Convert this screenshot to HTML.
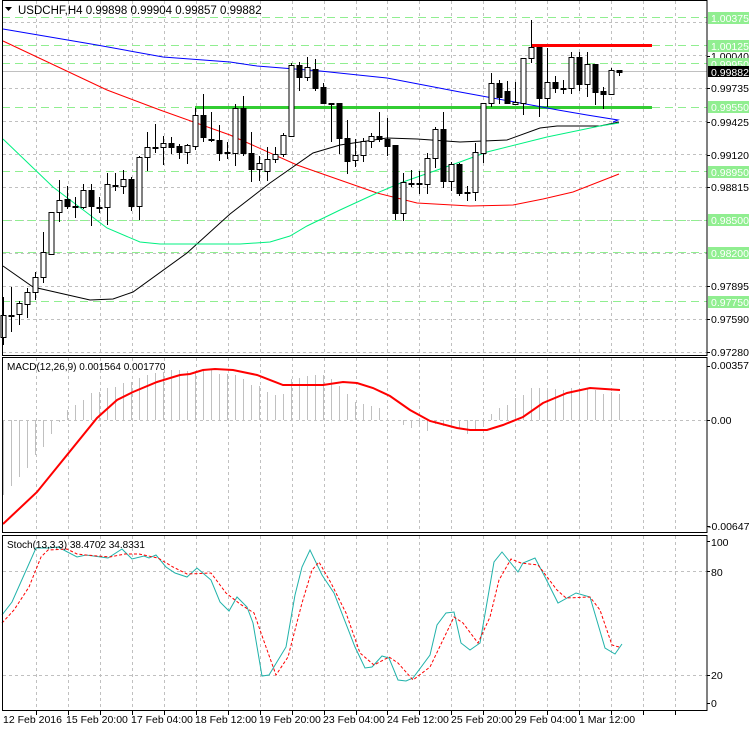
<!DOCTYPE html>
<html><head><meta charset="utf-8"><style>
html,body{margin:0;padding:0;background:#fff;width:749px;height:731px;overflow:hidden}
svg{display:block;font-family:"Liberation Sans",sans-serif}
</style></head><body>
<svg id="s" width="749" height="731" viewBox="0 0 749 731" xmlns="http://www.w3.org/2000/svg">
<rect width="749" height="731" fill="#fff"/>
<g id="grid" stroke="#c0c0c0" stroke-width="1" stroke-dasharray="3,3" fill="none"></g>
<g id="green" stroke="#90ee90" stroke-width="1" stroke-dasharray="8,5" fill="none">
<line x1="2" y1="17.5" x2="707" y2="17.5"/><line x1="2" y1="45.5" x2="707" y2="45.5"/><line x1="2" y1="63.5" x2="707" y2="63.5"/>
<line x1="2" y1="107.5" x2="707" y2="107.5"/><line x1="2" y1="171.5" x2="707" y2="171.5"/><line x1="2" y1="220.5" x2="707" y2="220.5"/>
<line x1="2" y1="252.5" x2="707" y2="252.5"/><line x1="2" y1="301.5" x2="707" y2="301.5"/>
</g>
<line x1="2" y1="71.5" x2="707" y2="71.5" stroke="#c0c0c0"/>
<g id="hist" stroke="#c0c0c0" stroke-width="1"></g>
<line x1="2" y1="420.5" x2="707" y2="420.5" stroke="#c0c0c0" stroke-dasharray="3,3"/>
<rect x="195" y="106" width="457" height="3" fill="#32cd32"/>
<rect x="532" y="44" width="120" height="3" fill="#ff0000"/>
<g fill="none" stroke-width="1">
<polyline stroke="#0000ff" points="3,29 97,45 163,57 230,62 257,66 320,71 387,78 460,92 542,107 558,110 587,115 618,120 613,122"/>
<polyline stroke="#ff0000" points="3,41 107,90 160,110 230,135 297,165 377,193 417,203 470,206 513,205 543,199 573,192 619,174"/>
<polyline stroke="#000" points="3,266 33,287 90,300 113,299 133,292 187,253 230,214 270,183 313,153 340,145 387,138 417,139 460,142 507,140 540,128 557,126 600,126 619,122"/>
<polyline stroke="#00f080" points="3,139 53,187 107,228 140,242 160,244 240,244 270,242 290,236 307,226 340,210 377,193 403,182 460,162 487,152 547,137 600,126 619,123"/>
</g>
<g id="candles"></g>
<polyline fill="none" stroke="#ff0000" stroke-width="2" points="3,524 37,492 67,455 97,418 117,400 133,392 157,382 180,375 190,374 203,370 215,369 233,370 257,375 283,385 323,385 343,382 357,383 373,388 390,396 410,410 430,421 457,428 470,430 487,430 503,425 523,417 543,403 567,393 590,388 620,390"/>
<polyline fill="none" stroke="#20b2aa" stroke-width="1" points="2,615 12,602 36,548 48,548 58,547 77,557 86,555 108,558 122,549 132,559 144,556 149,558 156,555 166,567 175,573 187,577 197,568 211,580 220,602 229,611 237,597 247,607 253,623 262,676 269,675 286,647 295,595 302,567 310,550 322,575 334,593 355,647 365,668 372,667 382,656 389,658 398,680 406,681 413,678 430,655 437,625 446,613 454,612 461,643 470,650 480,643 494,562 502,552 518,572 523,563 535,558 545,577 558,603 576,593 590,597 605,648 615,654 622,644"/>
<polyline fill="none" stroke="#ff0000" stroke-width="1" stroke-dasharray="3,2" points="2,623 14,610 29,587 41,557 48,550 67,549 77,554 86,555 110,557 125,554 139,554 158,558 173,567 187,574 211,573 226,593 240,604 254,613 266,647 276,675 288,657 302,603 312,570 319,562 331,583 346,613 360,653 374,665 389,657 398,663 413,680 430,667 442,642 454,617 463,623 478,643 490,617 499,580 511,559 521,563 538,565 557,590 566,598 590,597 600,610 612,645 619,647"/>
<g fill="none" stroke="#000" stroke-width="1">
<rect x="2.5" y="0.5" width="704.5" height="355"/>
<rect x="2.5" y="357.5" width="704.5" height="175"/>
<rect x="2.5" y="535.5" width="704.5" height="175"/>
</g>
<polygon points="5,7 12,7 8.5,11" fill="#000"/>
<text x="18" y="14" font-size="11.5" fill="#000">USDCHF,H4  0.99898 0.99904 0.99857 0.99882</text>
<text x="7" y="370" font-size="10" fill="#000">MACD(12,26,9) 0.001564 0.001770</text>
<text x="7" y="548" font-size="10" fill="#000">Stoch(13,3,3) 38.4702 34.8331</text>
<g font-size="10.5" fill="#000" id="axis">
<text x="711" y="60">1.00040</text>
<text x="711" y="92">0.99735</text>
<text x="711" y="126">0.99425</text>
<text x="711" y="159">0.99120</text>
<text x="711" y="191">0.98815</text>
<text x="711" y="290">0.97895</text>
<text x="711" y="323">0.97590</text>
<text x="711" y="356">0.97280</text>
<text x="711" y="369">0.003577</text>
<text x="711" y="424">0.00</text>
<text x="708" y="530">-0.00647</text>
<text x="711" y="546">100</text>
<text x="711" y="576">80</text>
<text x="711" y="679">20</text>
<text x="711" y="707">0</text>
</g>
<g font-size="10.5">
<rect x="708" y="12" width="41" height="12" fill="#90ee90"/><text x="711" y="22" fill="#fff">1.00375</text>
<rect x="708" y="40" width="41" height="12" fill="#90ee90"/><text x="711" y="50" fill="#fff">1.00125</text>
<rect x="708" y="58" width="41" height="12" fill="#90ee90"/><text x="711" y="68" fill="#fff">0.99950</text>
<rect x="708" y="66" width="41" height="11" fill="#000"/><text x="711" y="76" fill="#fff">0.99882</text>
<rect x="708" y="101" width="41" height="12" fill="#90ee90"/><text x="711" y="111" fill="#fff">0.99550</text>
<rect x="708" y="166" width="41" height="12" fill="#90ee90"/><text x="711" y="176" fill="#fff">0.98950</text>
<rect x="708" y="214" width="41" height="12" fill="#90ee90"/><text x="711" y="224" fill="#fff">0.98500</text>
<rect x="708" y="247" width="41" height="12" fill="#90ee90"/><text x="711" y="257" fill="#fff">0.98200</text>
<rect x="708" y="296" width="41" height="12" fill="#90ee90"/><text x="711" y="306" fill="#fff">0.97750</text>
</g>
<g font-size="10.5" fill="#000">
<text x="3" y="723">12 Feb 2016</text>
<text x="66" y="723">15 Feb 20:00</text>
<text x="131" y="723">17 Feb 04:00</text>
<text x="195" y="723">18 Feb 12:00</text>
<text x="259" y="723">19 Feb 20:00</text>
<text x="323" y="723">23 Feb 04:00</text>
<text x="387" y="723">24 Feb 12:00</text>
<text x="451" y="723">25 Feb 20:00</text>
<text x="515" y="723">29 Feb 04:00</text>
<text x="579" y="723">1 Mar 12:00</text>
</g>
<g stroke="#000" id="ticks"></g>
</svg>
<script>
var NS="http://www.w3.org/2000/svg";
function el(p,t,a){var e=document.createElementNS(NS,t);for(var k in a)e.setAttribute(k,a[k]);document.getElementById(p).appendChild(e);return e;}
for(var k=0;k<=20;k++){var x=Math.round(36+31.95*k)+0.5;
 el("grid","line",{x1:x,y1:1,x2:x,y2:355});el("grid","line",{x1:x,y1:358,x2:x,y2:532});el("grid","line",{x1:x,y1:536,x2:x,y2:710});
 el("ticks","line",{x1:x,y1:711,x2:x,y2:715});}
[22,55,88,121,154,187,220,253,286,319,352].forEach(function(y){el("grid","line",{x1:3,y1:y+0.5,x2:707,y2:y+0.5});});
[571.5,675.5].forEach(function(y){el("grid","line",{x1:3,y1:y,x2:707,y2:y});});
[56,88,122,155,187,286,319,352,366,420,526,541,571,675,703].forEach(function(y){el("ticks","line",{x1:707,y1:y+0.5,x2:710,y2:y+0.5});});
var h=[495,486,477,468,455,447,434,422,410,405,400,393,392,388,387,383,382,378,375,373,372,370,370,371,
371,370,369,374,374,375,379,385,386,392,395,394,379,378,376,375,375,379,386,394,402,404,406,408,419,420,425,428,427,431,424,426,428,429,434,430,427,414,408,405,398,395,388,388,391,389,390,388,391,388,390,394,392,394];
h.forEach(function(y,k){var x=Math.round(3.3+8*k)+0.5;el("hist","line",{x1:x,y1:420,x2:x,y2:y});});
var c=[[315,337,297,345,1],[315,316,287,332,0],[303,314,301,325,1],[292,304,288,318,1],[277,292,272,300,1],[252,277,232,283,1],[212,254,212,254,1],[200,212,180,222,1],[199,206,186,209,0],[206,207,197,218,0],[190,207,184,209,1],[190,206,184,226,0],[207,208,197,213,0],[184,207,173,225,1],[185,186,173,191,0],[179,186,170,194,1],[179,206,177,211,0],[157,206,156,220,1],[147,157,132,171,1],[147,148,124,153,0],[143,147,136,165,1],[143,147,137,154,0],[146,152,144,159,0],[145,152,144,164,1],[115,146,108,150,1],[115,137,94,142,0],[139,140,112,142,0],[140,153,125,161,0],[152,153,142,159,0],[108,153,104,166,1],[108,153,96,156,0],[153,169,132,182,0],[163,169,156,181,1],[159,171,147,181,1],[154,159,147,163,1],[135,154,133,157,1],[65,136,63,136,1],[65,77,62,91,0],[67,77,57,81,1],[69,88,59,91,0],[87,103,83,104,0],[103,104,103,142,0],[103,138,103,154,0],[138,161,120,174,0],[155,160,139,167,1],[141,155,138,162,1],[136,141,133,148,1],[136,139,112,142,0],[139,146,118,156,0],[145,213,145,220,0],[182,213,173,221,1],[183,184,170,187,0],[183,184,171,194,0],[158,184,153,194,1],[129,158,127,168,1],[129,181,112,188,0],[164,181,162,191,1],[164,193,163,196,0],[192,193,186,201,0],[152,192,143,201,1],[103,153,103,163,1],[83,103,73,107,1],[83,97,80,104,0],[91,103,81,104,0],[102,104,82,104,1],[58,103,58,115,1],[47,58,20,63,1],[47,98,47,117,0],[82,98,48,107,1],[82,88,76,93,0],[88,89,80,94,0],[57,88,52,94,1],[57,84,52,91,0],[64,84,52,97,1],[64,92,64,105,0],[91,94,87,109,0],[70,94,68,94,1],[70,72,70,76,0]];
c.forEach(function(d,k){var x=Math.round(3.3+8*k)+0.5;
 el("candles","line",{x1:x,y1:d[2],x2:x,y2:d[3],stroke:"#000"});
 var hh=Math.max(d[1]-d[0],1);
 el("candles","rect",{x:x-2.5,y:d[0]+0.5,width:5,height:hh,fill:d[4]?"#fff":"#000",stroke:"#000","stroke-width":1});});
</script>
</body></html>
